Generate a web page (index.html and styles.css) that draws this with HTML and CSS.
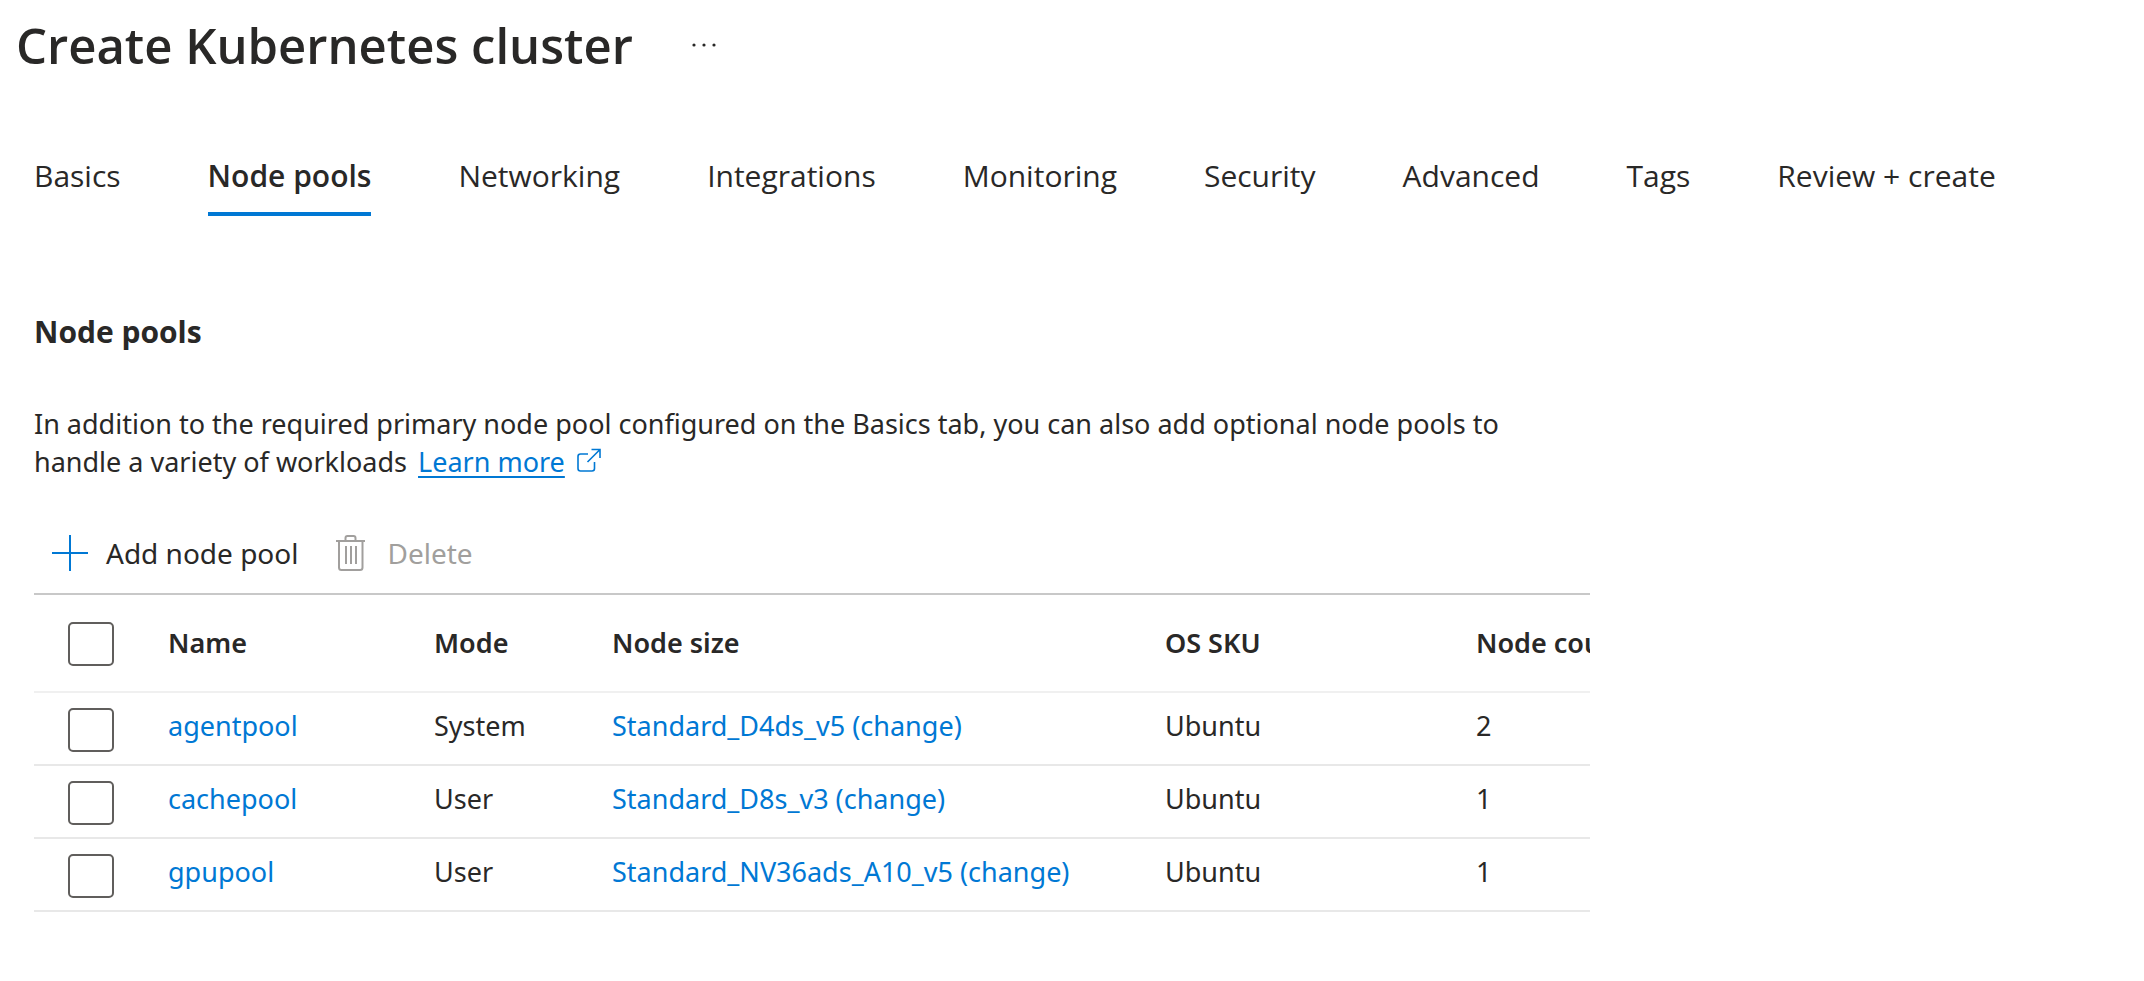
FILE: index.html
```
<!DOCTYPE html>
<html lang="en">
<head>
<meta charset="utf-8">
<meta name="viewport" content="width=device-width, initial-scale=1">
<title>Create Kubernetes cluster</title>
<link rel="stylesheet" href="styles.css">
</head>
<body>
<header class="page-header">
  <h1 class="page-title">Create Kubernetes cluster</h1>
  <button class="more-button" type="button" aria-label="More actions">
    <svg class="more-icon" viewBox="0 0 26 6" aria-hidden="true"><circle cx="3" cy="3" r="1.6"/><circle cx="13" cy="3" r="1.6"/><circle cx="23" cy="3" r="1.6"/></svg>
  </button>
</header>
<nav class="tabs" aria-label="Create steps">
  <a class="tab" href="#basics">Basics</a>
  <a class="tab tab-active" href="#node-pools" aria-current="page">Node pools</a>
  <a class="tab" href="#networking">Networking</a>
  <a class="tab" href="#integrations">Integrations</a>
  <a class="tab" href="#monitoring">Monitoring</a>
  <a class="tab" href="#security">Security</a>
  <a class="tab" href="#advanced">Advanced</a>
  <a class="tab" href="#tags">Tags</a>
  <a class="tab" href="#review">Review + create</a>
</nav>
<main class="content" id="node-pools">
  <h2 class="section-title">Node pools</h2>
  <p class="description">In addition to the required primary node pool configured on the Basics tab, you can also add optional node pools to handle a variety of workloads <a class="learn-more" href="#learn-more">Learn more<svg class="external-icon" viewBox="0 0 24 24" aria-hidden="true"><path d="M11 6H3.500Q1 6 1 8.500V20.500Q1 23 3.500 23H15Q17.500 23 17.500 20.500V14M14.500 1.500H23V10M22.500 2L10.500 14"/></svg></a></p>
  <div class="toolbar">
    <button class="tool" type="button">
      <svg class="tool-icon add-icon" viewBox="0 0 36 36" aria-hidden="true"><path d="M18 0V36M0 18H36"/></svg>
      Add node pool
    </button>
    <button class="tool" type="button" disabled>
      <svg class="tool-icon delete-icon" viewBox="0 0 36 36" aria-hidden="true"><path d="M3 6H32M6 6V32.500Q6 35 8.500 35H27Q29.500 35 29.500 32.500V6M12.500 5V3Q12.500 1 14.500 1H20.500Q22.500 1 22.500 3V5M13 11V29M18 11V29M23 11V29"/></svg>
      Delete
    </button>
  </div>
  <div class="table-view">
    <table class="pools">
      <colgroup><col class="col-select"><col class="col-name"><col class="col-mode"><col class="col-size"><col class="col-sku"><col class="col-count"></colgroup>
      <thead>
        <tr><th class="select-cell" scope="col"><input class="check" type="checkbox" aria-label="Select all node pools"></th><th scope="col">Name</th><th scope="col">Mode</th><th scope="col">Node size</th><th scope="col">OS SKU</th><th scope="col">Node count</th></tr>
      </thead>
      <tbody>
        <tr><td class="select-cell"><input class="check" type="checkbox" aria-label="Select agentpool"></td><td><a class="link" href="#agentpool">agentpool</a></td><td>System</td><td><a class="link" href="#size-agentpool">Standard_D4ds_v5 (change)</a></td><td>Ubuntu</td><td>2</td></tr>
        <tr><td class="select-cell"><input class="check" type="checkbox" aria-label="Select cachepool"></td><td><a class="link" href="#cachepool">cachepool</a></td><td>User</td><td><a class="link" href="#size-cachepool">Standard_D8s_v3 (change)</a></td><td>Ubuntu</td><td>1</td></tr>
        <tr><td class="select-cell"><input class="check" type="checkbox" aria-label="Select gpupool"></td><td><a class="link" href="#gpupool">gpupool</a></td><td>User</td><td><a class="link" href="#size-gpupool">Standard_NV36ads_A10_v5 (change)</a></td><td>Ubuntu</td><td>1</td></tr>
      </tbody>
    </table>
  </div>
</main>
</body>
</html>
```
FILE: styles.css
```
:root {
  --text: #292827;
  --accent: #0078d4;
  --muted: #a19f9d;
  --font-heading: "Segoe UI", "Open Sans", sans-serif;
  --font-body: "Segoe UI", "Noto Sans", sans-serif;
}

* {
  box-sizing: border-box;
}

body {
  margin: 0;
  background: #fff;
  color: var(--text);
  font: 400 27px/38px var(--font-body);
}

button {
  border: 0;
  padding: 0;
  background: none;
  color: inherit;
  font: inherit;
}

.page-header {
  display: flex;
  align-items: center;
  gap: 58px;
  padding: 11px 16px 0;
}

.page-title {
  margin: 0;
  font-family: var(--font-heading);
  font-size: 49px;
  font-weight: 600;
  line-height: 68px;
}

.more-button {
  display: flex;
  align-items: center;
  height: 68px;
}

.more-icon {
  width: 26px;
  height: 6px;
  fill: var(--text);
}

.tabs {
  display: flex;
  gap: 87px;
  padding: 78px 34px 0;
  font-family: var(--font-heading);
  font-size: 30px;
}

.tab {
  height: 59px;
  border-bottom: 4px solid transparent;
  color: inherit;
  text-decoration: none;
  white-space: nowrap;
}

.tab-active {
  border-color: var(--accent);
  font-weight: 600;
}

.content {
  max-width: 1624px;
  padding: 97px 34px 0;
}

.section-title {
  margin: 0 0 54px;
  font-family: var(--font-heading);
  font-size: 30px;
  font-weight: 700;
  line-height: 38px;
}

.description {
  max-width: 1520px;
  margin: 0;
}

.learn-more {
  margin-left: 4px;
  color: var(--accent);
  text-decoration: underline;
  text-decoration-thickness: 2px;
  text-underline-offset: 4px;
  white-space: nowrap;
}

.external-icon {
  width: 24px;
  height: 24px;
  margin-left: 12px;
  fill: none;
  stroke: currentColor;
  stroke-width: 1.6;
}

.toolbar {
  display: flex;
  gap: 35px;
  padding: 34px 18px 2px;
  border-bottom: 2px solid #c8c8c8;
  font-size: 28px;
}

.tool {
  display: flex;
  align-items: center;
  gap: 18px;
  height: 76px;
}

.tool:disabled {
  color: var(--muted);
}

.tool-icon {
  width: 36px;
  height: 36px;
  fill: none;
  stroke: currentColor;
  stroke-width: 2;
}

.add-icon {
  color: var(--accent);
}

.table-view {
  overflow: hidden;
}

.pools {
  width: 1700px;
  table-layout: fixed;
  border-spacing: 0;
}

.col-select { width: 134px; }
.col-name { width: 266px; }
.col-mode { width: 178px; }
.col-size { width: 553px; }
.col-sku { width: 311px; }

.pools th,
.pools td {
  padding: 0;
  border-bottom: 2px solid #e8e8e8;
  text-align: left;
  vertical-align: middle;
  white-space: nowrap;
}

.pools th {
  height: 98px;
  border-color: #f0f0f0;
  font-weight: 600;
}

.pools td {
  height: 73px;
  padding-bottom: 6px;
}

.pools .select-cell {
  padding: 2px 0 0 34px;
}

.check {
  display: block;
  width: 46px;
  height: 44px;
  margin: 0;
  appearance: none;
  border: 2px solid #605e5c;
  border-radius: 5px;
  background: #fff;
}

.link {
  color: var(--accent);
  text-decoration: none;
}
```
